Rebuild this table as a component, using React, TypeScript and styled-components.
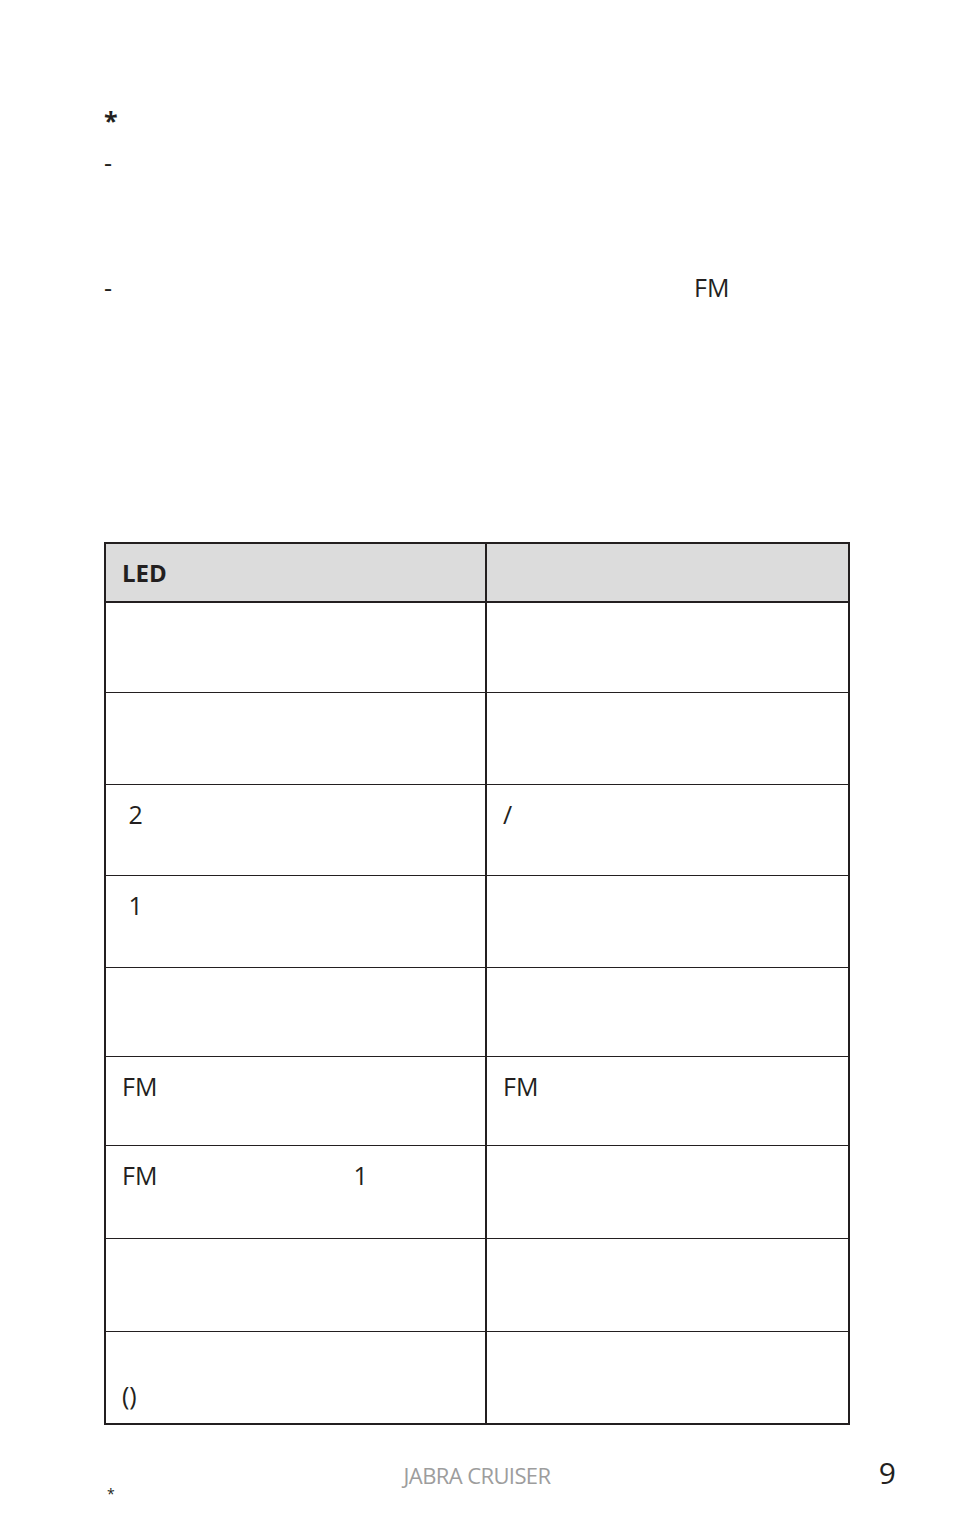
import React, { FC } from 'react';
import styled, { createGlobalStyle } from 'styled-components';

const ink = '#231f20';

const GlobalStyle = createGlobalStyle`
  html, body {
    margin: 0;
    padding: 0;
    background: #ffffff;
  }
  body {
    font-family: "Open Sans", "Noto Sans CJK SC", sans-serif;
    color: ${ink};
  }
`;

const Page = styled.div`
  width: 954px;
  min-height: 1536px;
  box-sizing: border-box;
  padding: 105px 104px 0;
`;

const Notes = styled.div`
  display: flex;
  flex-direction: column;
`;

const NoteLine = styled.div<{ $top?: number; $bold?: boolean }>`
  margin-top: ${({ $top }) => $top ?? 0}px;
  font-size: 25px;
  line-height: 30px;
  height: 30px;
  font-weight: ${({ $bold }) => ($bold ? 700 : 400)};
  white-space: pre;
`;

const Gap = styled.span<{ $w: number }>`
  display: inline-block;
  width: ${({ $w }) => $w}px;
`;

const Table = styled.div`
  margin-top: 240px;
  width: 746px;
  box-sizing: border-box;
  border: 2px solid ${ink};
`;

const Row = styled.div<{ $h: number; $head?: boolean; $last?: boolean }>`
  display: grid;
  grid-template-columns: 381px 1fr;
  height: ${({ $h }) => $h}px;
  box-sizing: border-box;
  background: ${({ $head }) => ($head ? '#dcdcdc' : 'transparent')};
  border-bottom: ${({ $head, $last }) =>
    $last ? 'none' : $head ? `2px solid ${ink}` : `1px solid ${ink}`};
`;

const Cell = styled.div<{ $left?: boolean }>`
  box-sizing: border-box;
  padding: 12px 16px 0;
  font-size: 25px;
  line-height: 34px;
  white-space: pre;
  border-right: ${({ $left }) => ($left ? `2px solid ${ink}` : 'none')};
`;

const HeadCell = styled(Cell)`
  padding: 0 16px;
  font-size: 24px;
  font-weight: 700;
  line-height: 57px;
`;

const Footer = styled.div`
  display: grid;
  grid-template-columns: 1fr auto 1fr;
  align-items: start;
  margin: 30px -46px 0;
  height: 60px;
`;

const FootNote = styled.div`
  margin: 29px 0 0 49px;
  font-size: 14px;
  line-height: 20px;
`;

const Brand = styled.div`
  margin-top: 5px;
  font-size: 22px;
  line-height: 30px;
  color: #9d9d9d;
  letter-spacing: -0.6px;
`;

const PageNo = styled.div`
  justify-self: end;
  font-size: 30px;
  line-height: 36px;
`;

type RowData = { h: number; left: React.ReactNode; right: React.ReactNode };

const rows: RowData[] = [
  { h: 90, left: '', right: '' },
  { h: 92, left: '', right: '' },
  { h: 91, left: '\u00a02', right: '/' },
  { h: 92, left: '\u00a01', right: '' },
  { h: 89, left: '', right: '' },
  { h: 89, left: 'FM', right: 'FM' },
  {
    h: 93,
    left: (
      <>
        FM<Gap $w={196} />1
      </>
    ),
    right: '',
  },
  { h: 93, left: '', right: '' },
  { h: 91, left: '\n()', right: '' },
];

const App: FC = () => (
  <>
    <GlobalStyle />
    <Page>
      <Notes>
        <NoteLine $bold>*</NoteLine>
        <NoteLine $top={12}>-</NoteLine>
        <NoteLine $top={95}>
          -<Gap $w={582} />
          FM
        </NoteLine>
      </Notes>

      <Table>
        <Row $h={59} $head>
          <HeadCell $left>LED</HeadCell>
          <HeadCell />
        </Row>
        {rows.map((r, i) => (
          <Row key={i} $h={r.h} $last={i === rows.length - 1}>
            <Cell $left>{r.left}</Cell>
            <Cell>{r.right}</Cell>
          </Row>
        ))}
      </Table>

      <Footer>
        <FootNote>*</FootNote>
        <Brand>JABRA CRUISER</Brand>
        <PageNo>9</PageNo>
      </Footer>
    </Page>
  </>
);

export default App;
